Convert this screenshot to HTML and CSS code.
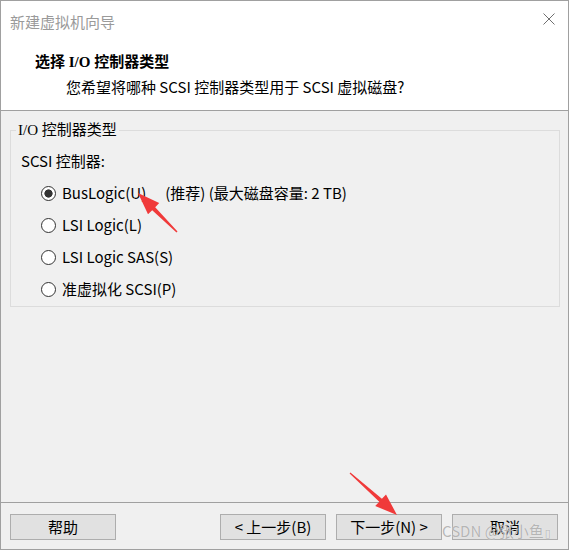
FILE: index.html
```html
<!DOCTYPE html>
<html lang="zh-CN">
<head>
<meta charset="utf-8">
<title>新建虚拟机向导</title>
<link rel="stylesheet" href="styles.css">
</head>
<body>
<div class="window">
  <header class="top">
    <div class="titlebar">
      <span class="title">新建虚拟机向导</span>
      <svg class="close" width="12" height="12" viewBox="0 0 12 12"><path d="M0.5 0.5 L11.5 11.5 M11.5 0.5 L0.5 11.5" stroke="#6f6f6f" stroke-width="1" fill="none"/></svg>
    </div>
    <h1 class="heading">选择 I/O 控制器类型</h1>
    <p class="subtitle">您希望将哪种 SCSI 控制器类型用于 SCSI 虚拟磁盘?</p>
  </header>
  <main class="content">
    <fieldset class="group">
      <legend class="legend">I/O 控制器类型</legend>
      <div class="label">SCSI 控制器:</div>
      <div class="options">
        <div class="option"><span class="radio checked"></span><span>BusLogic(U)</span><span class="note">(推荐) (最大磁盘容量: 2 TB)</span></div>
        <div class="option"><span class="radio"></span><span>LSI Logic(L)</span></div>
        <div class="option"><span class="radio"></span><span>LSI Logic SAS(S)</span></div>
        <div class="option"><span class="radio"></span><span>准虚拟化 SCSI(P)</span></div>
      </div>
    </fieldset>
  </main>
  <footer class="footer">
    <button class="btn">帮助</button>
    <div class="btn-group">
      <button class="btn">&lt; 上一步(B)</button>
      <button class="btn">下一步(N) &gt;</button>
      <button class="btn">取消</button>
    </div>
  </footer>
  <svg class="annot" width="570" height="551" viewBox="0 0 570 551">
    <polygon fill="#f03a3a" points="138,193 159.2,203 155.2,207.2 177.5,231.5 176.5,232.5 152.2,210.2 148,214.2"/>
    <polygon fill="#f03a3a" points="397,515 375.2,506 379.3,501.8 349.6,473.4 350.4,472.6 381.9,498.8 386,494.5"/>
  </svg>
  <div class="watermark">CSDN @张小鱼<span class="tofu">▯</span></div>
</div>
</body>
</html>
```
FILE: styles.css
```css
html, body {
  margin: 0;
  padding: 0;
  background: #ffffff;
}

.window {
  position: relative;
  width: 569px;
  height: 550px;
  box-sizing: border-box;
  border: 1px solid #a0a0a0;
  display: flex;
  flex-direction: column;
  font-family: "Noto Sans CJK SC", "Noto Sans", sans-serif;
  font-size: 15px;
  color: #000;
  background: #f0f0f0;
}

.top {
  height: 110px;
  box-sizing: border-box;
  border-bottom: 1px solid #a0a0a0;
  background: #ffffff;
  padding: 11px 13px 0 9px;
}

.titlebar {
  display: flex;
  justify-content: space-between;
  align-items: flex-start;
}

.title {
  font-size: 15px;
  line-height: 20px;
  color: #9a9a9a;
}

.close {
  display: block;
  margin-top: 1px;
}

.heading {
  margin: 20px 0 0 25px;
  font-family: "Liberation Serif", "Noto Sans CJK SC", serif;
  font-size: 15px;
  font-weight: bold;
  line-height: 20px;
}

.subtitle {
  margin: 5px 0 0 56px;
  font-size: 15px;
  line-height: 20px;
}

.content {
  flex: 1;
  padding: 10px 0 0 9px;
}

.group {
  margin: 0;
  width: 550px;
  height: 186px;
  box-sizing: border-box;
  border: 1px solid #dcdcdc;
  padding: 0;
  min-width: 0;
}

.legend {
  margin-left: 5px;
  padding: 0 2px;
  font-family: "Liberation Serif", "Noto Sans CJK SC", serif;
  font-size: 15px;
  line-height: 18px;
}

.label {
  margin: 12px 0 0 10px;
  line-height: 20px;
}

.options {
  margin-top: 6px;
  padding-left: 30px;
}

.option {
  height: 32px;
  display: flex;
  align-items: center;
  line-height: 20px;
}

.radio {
  width: 15px;
  height: 15px;
  box-sizing: border-box;
  border: 1px solid #333;
  border-radius: 50%;
  background: #fff;
  margin-right: 6px;
  flex: none;
}

.radio.checked {
  background: radial-gradient(circle, #333 0, #333 3.8px, #fff 4.4px);
}

.note {
  margin-left: 19px;
}

.footer {
  height: 47px;
  box-sizing: border-box;
  border-top: 1px solid #a0a0a0;
  padding: 11px 10px 0 9px;
  display: flex;
  justify-content: space-between;
  align-items: flex-start;
}

.btn-group {
  display: flex;
  gap: 10px;
}

.btn {
  width: 106px;
  height: 26px;
  box-sizing: border-box;
  border: 1px solid #adadad;
  background: #e1e1e1;
  padding: 0;
  margin: 0;
  font-family: "Noto Sans CJK SC", "Noto Sans", sans-serif;
  font-size: 15px;
  line-height: 22px;
  color: #000;
}

.annot {
  position: absolute;
  top: -1px;
  left: -1px;
  pointer-events: none;
}

.watermark {
  position: absolute;
  left: 441px;
  top: 519px;
  font-size: 15px;
  line-height: 22px;
  color: rgba(160, 160, 160, 0.75);
  text-shadow: 0 0 1px rgba(255, 255, 255, 0.8);
  pointer-events: none;
}

.tofu {
  font-family: "DejaVu Sans", sans-serif;
  font-size: 11px;
  margin-left: 1px;
}
```
